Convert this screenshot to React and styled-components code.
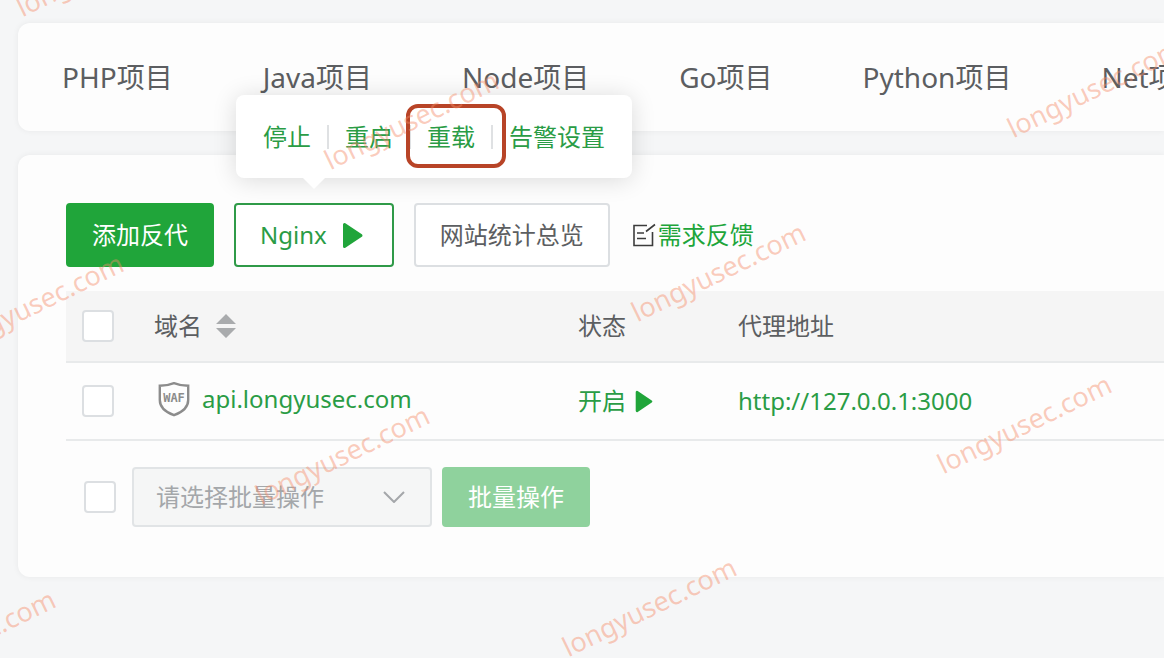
import React, { useState } from "react"
import styled, { createGlobalStyle } from "styled-components"

const tabs = ["PHP项目", "Java项目", "Node项目", "Go项目", "Python项目", "Net项目"]

const sites = [
  { domain: "api.longyusec.com", status: "开启", proxy: "http://127.0.0.1:3000" },
]

// left / baseline of every watermark on the page
const watermarks = [
  { x: 24, y: 21 },
  { x: 332, y: 174 },
  { x: 1015, y: 142 },
  { x: -43, y: 357 },
  { x: 639, y: 326 },
  { x: 263, y: 509 },
  { x: 945, y: 478 },
  { x: -111, y: 693 },
  { x: 570, y: 661 },
]

const PlayIcon = ({ size }) => (
  <svg width={size} height={size} viewBox="0 0 27 27" aria-hidden="true">
    <path d="M3.5 2.500v22L20 13.500z" fill="#20a53a" stroke="#20a53a" strokeWidth="3" strokeLinejoin="round" />
  </svg>
)

const SortIcon = () => (
  <svg width="20" height="24" viewBox="0 0 20 24" aria-hidden="true">
    <path d="M10 0l10 10H0zM0 14h20L10 24z" fill="#a9abad" />
  </svg>
)

const FeedbackIcon = () => (
  <svg width="24" height="24" viewBox="0 0 24 24" fill="none" stroke="#3c3c3c" strokeWidth="1.6" aria-hidden="true">
    <path d="M15 2.500H2v20h18.500V9M14 8.500L23 1.500M5 10h7M5 15.500h9" />
  </svg>
)

const WafIcon = () => (
  <svg width="32" height="36" viewBox="0 0 32 36" aria-hidden="true">
    <path
      d="M16 2.200C12 3.800 7 4.800 1.800 4.800V19c0 7 5.200 12 14.200 15.200C25 31 30.200 26 30.200 19V4.800C25 4.800 20 3.800 16 2.200z"
      fill="none"
      stroke="#8c8c8c"
      strokeWidth="2.400"
    />
    <text x="16" y="21" textAnchor="middle" fontFamily="DejaVu Sans Mono, monospace" fontWeight="700" fontSize="12" fill="#8c8c8c">
      WAF
    </text>
  </svg>
)

const ChevronIcon = () => (
  <svg width="22" height="12" viewBox="0 0 22 12" fill="none" stroke="#a4a7aa" strokeWidth="2" aria-hidden="true">
    <path d="M1 1l10 10L21 1" />
  </svg>
)

const App = () => {
  const [checked, setChecked] = useState(false)
  const toggle = () => setChecked(!checked)

  return (
    <>
      <GlobalStyle />
      <Page>
        <TabBar>
          {tabs.map(tab => (
            <Tab key={tab} href="#">{tab}</Tab>
          ))}
        </TabBar>

        <Panel>
          <Toolbar>
            <Button $variant="primary">添加反代</Button>
            <PopoverAnchor>
              <Button $variant="outline">
                Nginx
                <PlayIcon size={27} />
              </Button>
              <Popover>
                <Action>停止</Action>
                <Divider />
                <Action>重启</Action>
                <Divider />
                <Action>
                  重载
                  <Highlight />
                </Action>
                <Divider />
                <Action>告警设置</Action>
              </Popover>
            </PopoverAnchor>
            <Button>网站统计总览</Button>
            <Feedback href="#">
              <FeedbackIcon />
              需求反馈
            </Feedback>
          </Toolbar>

          <Table>
            <colgroup>
              <CheckCol />
              <DomainCol />
              <StatusCol />
              <col />
            </colgroup>
            <thead>
              <tr>
                <HeadCell>
                  <Checkbox type="checkbox" aria-label="全选" checked={checked} onChange={toggle} />
                </HeadCell>
                <HeadCell>
                  <CellContent $gap={14}>域名 <SortIcon /></CellContent>
                </HeadCell>
                <HeadCell>状态</HeadCell>
                <HeadCell>代理地址</HeadCell>
              </tr>
            </thead>
            <tbody>
              {sites.map(site => (
                <tr key={site.domain}>
                  <Cell>
                    <Checkbox type="checkbox" aria-label={site.domain} checked={checked} onChange={toggle} />
                  </Cell>
                  <Cell>
                    <Domain>
                      <WafIcon />
                      <Link href="#">{site.domain}</Link>
                    </Domain>
                  </Cell>
                  <Cell>
                    <CellContent $gap={8}>
                      <Link href="#">{site.status}</Link>
                      <PlayIcon size={23} />
                    </CellContent>
                  </Cell>
                  <Cell>
                    <Link href="#">{site.proxy}</Link>
                  </Cell>
                </tr>
              ))}
            </tbody>
          </Table>

          <BatchBar>
            <Checkbox type="checkbox" aria-label="批量选择" checked={checked} onChange={toggle} />
            <SelectWrapper>
              <Select aria-label="批量操作">
                <option>请选择批量操作</option>
              </Select>
              <ChevronIcon />
            </SelectWrapper>
            <BatchButton $variant="muted">批量操作</BatchButton>
          </BatchBar>
        </Panel>

        {watermarks.map(({ x, y }) => (
          <Watermark key={`${x},${y}`} style={{ left: x, top: y }} aria-hidden="true">
            longyusec.com
          </Watermark>
        ))}
      </Page>
    </>
  )
}

export default App

const GlobalStyle = createGlobalStyle`
  * {
    box-sizing: border-box;
  }

  body {
    margin: 0;
    background: #f5f6f7;
    color: #5c5e61;
    font-family: "Noto Sans", "Noto Sans CJK SC", sans-serif;
    font-size: 24px;
    line-height: 32px;
  }

  button, select {
    font: inherit;
  }

  a {
    text-decoration: none;
  }

  svg {
    flex-shrink: 0;
  }
`

const Page = styled.main`
  position: relative;
  display: flex;
  flex-direction: column;
  gap: 24px;
  min-height: 100vh;
  padding: 23px 0 24px 18px;
  overflow: hidden;
`

const TabBar = styled.nav`
  display: flex;
  gap: 90px;
  padding: 34px 44px;
  overflow: hidden;
  background: #fdfdfd;
  border-radius: 12px 0 0 12px;
  box-shadow: 0 0 6px rgba(0, 0, 0, 0.06);
`

const Tab = styled.a`
  flex-shrink: 0;
  color: #5c5e61;
  font-size: 28px;
  line-height: 40px;
  white-space: nowrap;
`

const Panel = styled.section`
  padding: 48px 0 50px 48px;
  background: #fdfdfd;
  border-radius: 12px 0 0 12px;
  box-shadow: 0 0 6px rgba(0, 0, 0, 0.06);
`

const Toolbar = styled.div`
  display: flex;
  align-items: center;
  gap: 20px;
  margin-bottom: 24px;
`

const variants = {
  primary: { background: "#20a53a", border: "#20a53a", color: "#fff" },
  outline: { background: "#fff", border: "#2f9a48", color: "#2a9c45" },
  muted: { background: "#8fd29d", border: "#8fd29d", color: "#fff" },
  plain: { background: "#fff", border: "#dcdfe2", color: "#5c5e61" },
}

const Button = styled.button`
  display: flex;
  align-items: center;
  gap: 14px;
  height: 64px;
  padding: 0 24px;
  border: 2px solid ${({ $variant = "plain" }) => variants[$variant].border};
  border-radius: 4px;
  background: ${({ $variant = "plain" }) => variants[$variant].background};
  color: ${({ $variant = "plain" }) => variants[$variant].color};
  white-space: nowrap;
  cursor: pointer;
`

const BatchButton = styled(Button)`
  height: 60px;
`

const PopoverAnchor = styled.div`
  position: relative;
`

const Popover = styled.div`
  position: absolute;
  left: 2px;
  bottom: calc(100% + 25px);
  display: flex;
  align-items: center;
  gap: 16px;
  height: 83px;
  padding: 0 27px;
  background: #fff;
  border-radius: 8px;
  box-shadow: 0 2px 24px rgba(0, 0, 0, 0.14);

  &::after {
    content: "";
    position: absolute;
    left: 67px;
    top: 100%;
    border: 11px solid transparent;
    border-top-color: #fff;
    border-bottom: 0;
  }
`

const Action = styled.button`
  position: relative;
  padding: 0;
  border: 0;
  background: none;
  color: #2a9c45;
  white-space: nowrap;
  cursor: pointer;
`

const Divider = styled.span`
  width: 2px;
  height: 24px;
  background: #dfe1e3;
`

const Highlight = styled.span`
  position: absolute;
  inset: -17px -31px -15px -21px;
  border: 4px solid #b84427;
  border-radius: 12px;
  pointer-events: none;
`

const Feedback = styled.a`
  display: flex;
  align-items: center;
  gap: 2px;
  padding-left: 2px;
  color: #20a53a;
  white-space: nowrap;
`

const Table = styled.table`
  width: 100%;
  table-layout: fixed;
  border-collapse: separate;
  border-spacing: 0;
`

const CheckCol = styled.col`
  width: 72px;
`

const DomainCol = styled.col`
  width: 424px;
`

const StatusCol = styled.col`
  width: 160px;
`

const Cell = styled.td`
  height: 78px;
  padding: 0 0 0 16px;
  border-bottom: 2px solid #e8eaeb;
  text-align: left;
  vertical-align: middle;
  white-space: nowrap;
`

const HeadCell = styled(Cell).attrs({ as: "th", scope: "col" })`
  height: 72px;
  background: #f5f5f5;
  font-weight: 400;
`

const CellContent = styled.div`
  display: flex;
  align-items: center;
  gap: ${({ $gap }) => $gap}px;
`

const Domain = styled(CellContent).attrs({ $gap: 12 })`
  padding: 0 0 4px 4px;
`

const Link = styled.a`
  color: #2a9c45;
`

const Checkbox = styled.input`
  appearance: none;
  display: block;
  width: 32px;
  height: 32px;
  margin: 0;
  border: 2px solid #dcdfe2;
  border-radius: 4px;
  background: #fff;

  &:checked {
    border-color: #20a53a;
    background: #20a53a;
  }
`

const BatchBar = styled.div`
  display: flex;
  align-items: center;
  padding: 26px 0 0 18px;
`

const SelectWrapper = styled.div`
  position: relative;
  width: 300px;
  margin: 0 10px 0 16px;

  svg {
    position: absolute;
    right: 27px;
    top: 24px;
    pointer-events: none;
  }
`

const Select = styled.select`
  appearance: none;
  width: 100%;
  height: 60px;
  padding: 0 22px;
  border: 2px solid #e1e4e6;
  border-radius: 4px;
  background: #f5f6f6;
  color: #a4a7aa;
`

const Watermark = styled.span`
  position: absolute;
  color: rgba(245, 140, 105, 0.44);
  font-size: 27px;
  line-height: 28px;
  white-space: nowrap;
  transform-origin: left bottom;
  transform: translateY(-100%) rotate(-26deg);
  pointer-events: none;
`
